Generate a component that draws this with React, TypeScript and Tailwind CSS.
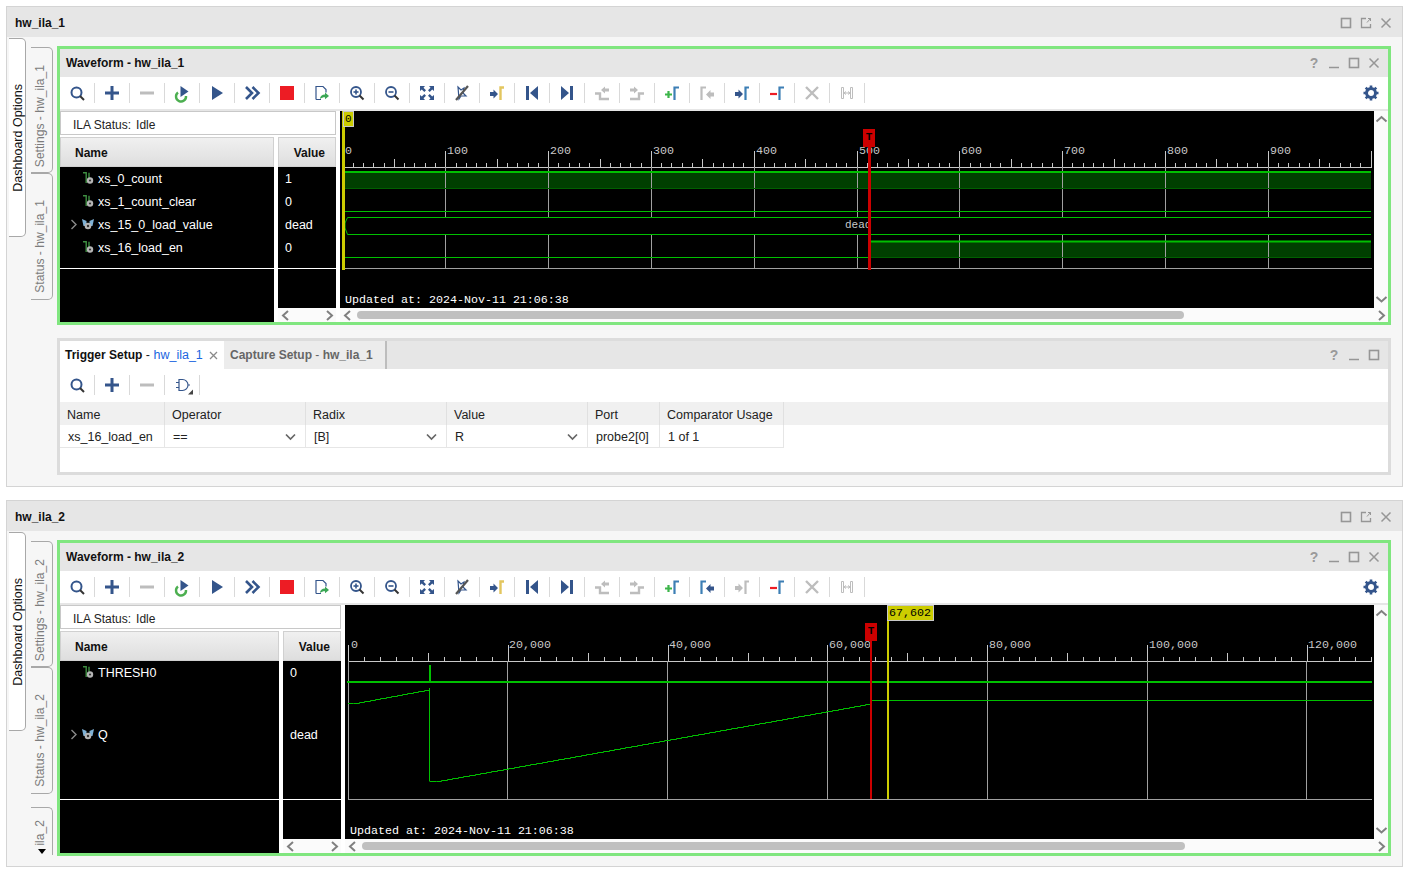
import React from "react";

const BLUE = "#34558b";
const GRAY = "#bdbdbd";
const MARKER = "#3d7fb5";
const MONO = "'Liberation Mono', monospace";

type IconName =
  | "search" | "plus" | "minus" | "runTrigger" | "play" | "fast" | "stop" | "export"
  | "zoomIn" | "zoomOut" | "fit" | "slash" | "goMarkerY" | "first" | "last"
  | "stepBack" | "stepNext" | "addMarker" | "prevMarker" | "prevMarkerOn"
  | "nextMarker" | "nextMarkerOff" | "delMarker" | "cross" | "swap" | "gate";

const ARROW_R = "M1 7h3.500V4.500L9 9l-4.500 4.500V11H1z";
const ARROW_L = "M15 7.500h-3.500V5L7 9.500l4.500 4.500v-2.500H15z";

const Icon: React.FC<{ name: IconName }> = ({ name }) => {
  const body = () => {
    switch (name) {
      case "search":
        return (
          <>
            <circle cx="7.5" cy="7.5" r="5" fill="none" stroke={BLUE} strokeWidth="2" />
            <path d="M11 11l4 4" stroke="#333" strokeWidth="2" />
          </>
        );
      case "plus":
        return <path d="M1 8h14M8 1v14" stroke={BLUE} strokeWidth="3" />;
      case "minus":
        return <path d="M1 8h14" stroke={GRAY} strokeWidth="3" />;
      case "runTrigger":
        return (
          <>
            <path d="M4 7.5a5 5 0 1 0 8 3.5" fill="none" stroke="#4caf50" strokeWidth="2.4" />
            <path d="M6.5 1l8 5.500-8 5.500z" fill={BLUE} />
          </>
        );
      case "play":
        return <path d="M3 1l11 7-11 7z" fill={BLUE} />;
      case "fast":
        return <path d="M2 2l6 6-6 6M8.5 2l6 6-6 6" fill="none" stroke={BLUE} strokeWidth="2.6" />;
      case "stop":
        return <rect x="1" y="1" width="14" height="14" fill="#ed1c24" />;
      case "export":
        return (
          <>
            <path d="M2 14.500v-13h7l3 3v3M2 14.500h5" fill="none" stroke={BLUE} strokeWidth="1.2" />
            <path d="M6 14c0-3 2-4.500 5-4.500V7.500l4 3.500-4 3.200v-2c-2 0-3.500.5-5 1.800z" fill="#3aa655" />
          </>
        );
      case "zoomIn":
      case "zoomOut":
        return (
          <>
            <circle cx="7" cy="7" r="5" fill="none" stroke={BLUE} strokeWidth="1.8" />
            <path d="M4.500 7h5" stroke={BLUE} strokeWidth="1.6" />
            {name === "zoomIn" && <path d="M7 4.500v5" stroke={BLUE} strokeWidth="1.6" />}
            <path d="M10.500 10.500l4 4" stroke="#333" strokeWidth="2" />
          </>
        );
      case "fit":
        return (
          <path
            d="M1 1h5L4.500 2.800 7 5.300 5.300 7 2.800 4.500 1 6zM15 1v5l-1.800-1.500L10.700 7 9 5.300l2.500-2.500L10 1zM1 15v-5l1.800 1.500L5.300 9 7 10.700l-2.500 2.500L6 15zM15 15h-5l1.500-1.800L9 10.700 10.700 9l2.500 2.500L15 10z"
            fill={BLUE}
          />
        );
      case "slash":
        return (
          <>
            <path d="M4 2l3 3 3-2-1 5 3 3H7l-2 3z" fill="none" stroke={BLUE} strokeWidth="1.2" />
            <path d="M14 1L2 15" stroke="#555" strokeWidth="2.2" />
          </>
        );
      case "goMarkerY":
        return (
          <>
            <path d={ARROW_R} fill={BLUE} />
            <path d="M11.500 15V2.500H15" fill="none" stroke="#e3c65f" strokeWidth="2.4" />
          </>
        );
      case "first":
        return <path d="M2 1h3v14H2zM14 1v14L6 8z" fill={BLUE} />;
      case "last":
        return <path d="M14 1h-3v14h3zM2 1v14l8-7z" fill={BLUE} />;
      case "stepBack":
        return (
          <>
            <path d="M1 8.500h5V14h9" fill="none" stroke={GRAY} strokeWidth="2.4" />
            <path d="M7 5l4-3.500v2h4v3h-4v2z" fill={GRAY} />
          </>
        );
      case "stepNext":
        return (
          <>
            <path d="M1 14h9V8.500h5" fill="none" stroke={GRAY} strokeWidth="2.4" />
            <path d="M1 3.500h4v-2L9 5 5 8.500v-2H1z" fill={GRAY} />
          </>
        );
      case "addMarker":
        return (
          <>
            <path d="M1 9.500h7M4.500 6v7" stroke="#3cb54a" strokeWidth="2.2" />
            <path d="M10.500 15V2.500H15" fill="none" stroke={MARKER} strokeWidth="2.2" />
          </>
        );
      case "prevMarker":
        return (
          <>
            <path d="M2.500 15V2.500H7" fill="none" stroke={GRAY} strokeWidth="2.2" />
            <path d={ARROW_L} fill={GRAY} />
          </>
        );
      case "prevMarkerOn":
        return (
          <>
            <path d="M2.500 15V2.500H7" fill="none" stroke={MARKER} strokeWidth="2.2" />
            <path d={ARROW_L} fill={BLUE} />
          </>
        );
      case "nextMarker":
        return (
          <>
            <path d={ARROW_R} fill={BLUE} />
            <path d="M11.500 15V2.500H15" fill="none" stroke={MARKER} strokeWidth="2.2" />
          </>
        );
      case "nextMarkerOff":
        return (
          <>
            <path d={ARROW_R} fill={GRAY} />
            <path d="M11.500 15V2.500H15" fill="none" stroke={GRAY} strokeWidth="2.2" />
          </>
        );
      case "delMarker":
        return (
          <>
            <path d="M1 9h7" stroke="#ed1c24" strokeWidth="2.2" />
            <path d="M10.500 15V2.500H15" fill="none" stroke={MARKER} strokeWidth="2.2" />
          </>
        );
      case "cross":
        return <path d="M2 2l12 12M14 2L2 14" stroke={GRAY} strokeWidth="2.4" />;
      case "swap":
        return (
          <path
            d="M2.500 2.500h2v11h-2zM11.500 2.500h2v11h-2zM5 8h6M5 8l2-1.500M5 8l2 1.500M11 8L9 6.500M11 8l-2 1.500"
            fill="none"
            stroke={GRAY}
            strokeWidth="1"
          />
        );
      case "gate":
        return (
          <>
            <path d="M5 2.500h3.500a5.500 5.500 0 0 1 0 11H5zM2 5.500h3M2 10.500h3M14 8h2" fill="none" stroke={BLUE} strokeWidth="1.2" />
            <path d="M19 12.500v5h-5z" fill="#444" />
          </>
        );
    }
  };
  return (
    <svg width="16" height="16" viewBox="0 0 16 16" overflow="visible">
      {body()}
    </svg>
  );
};

const Toolbar: React.FC<{ icons: IconName[] }> = ({ icons }) => (
  <div className="flex items-center">
    {icons.map((n, i) => (
      <div key={i} className="flex h-5 w-[35px] items-center justify-center border-r border-[#d9d9d9]">
        <Icon name={n} />
      </div>
    ))}
  </div>
);

const WinIcon: React.FC<{ kind: "help" | "min" | "max" | "float" | "close" }> = ({ kind }) => {
  if (kind === "help")
    return <span className="w-5 text-center text-[14px] font-bold leading-none text-[#9a9a9a]">?</span>;
  return (
    <svg width="20" height="12" viewBox="0 0 20 12" fill="none" stroke="#969696">
      {kind === "min" && <path d="M5 10.500h10" strokeWidth="1.5" />}
      {kind === "max" && <rect x="5.500" y="1.500" width="9" height="9" strokeWidth="1.6" />}
      {kind === "float" && (
        <>
          <path d="M10 1.500H5.500v9h9V7" strokeWidth="1.3" />
          <path d="M11 5.500l3.500-4M12 1.500h2.500V4" strokeWidth="1" />
        </>
      )}
      {kind === "close" && <path d="M5.500 1.500l9 9M14.500 1.500l-9 9" strokeWidth="1.5" />}
    </svg>
  );
};

const Chevron: React.FC<{ dir: "l" | "r" | "u" | "d" }> = ({ dir }) => {
  const d = { l: "M8 2L3 6.500 8 11", r: "M4 2l5 4.500L4 11", u: "M1.500 8.500L6.500 4l5 4.500", d: "M1.500 4l5 4.500L11.500 4" }[dir];
  return (
    <svg width="13" height="13" viewBox="0 0 13 13" className="shrink-0">
      <path d={d} fill="none" stroke="#808080" strokeWidth="2" />
    </svg>
  );
};

const BitIcon = () => (
  <svg width="12" height="13" viewBox="0 0 12 13" className="shrink-0">
    <path d="M1 .8h3.200V11M7 .8V6" fill="none" stroke="#3e8e41" strokeWidth="1.4" />
    <circle cx="8" cy="8.500" r="3.200" fill="#b5b5b5" />
    <circle cx="8" cy="8.500" r="1.100" fill="#333" />
  </svg>
);

const BusIcon = () => (
  <svg width="12" height="13" viewBox="0 0 12 13" className="shrink-0">
    <path d="M0 1l4.500 2V8H1.500zM12 1L7.500 3V8h3z" fill="#7fb2d6" />
    <circle cx="6" cy="8" r="3.300" fill="#b5b5b5" />
    <circle cx="6" cy="8" r="1.200" fill="#333" />
  </svg>
);

type Row = { name: string; value: string; bus?: boolean; top?: number };

const RailTab: React.FC<{ label: string; active?: boolean; className: string }> = ({ label, active, className }) => (
  <div
    className={`flex items-end justify-center border-[#a8a8a8] ${className} ${
      active ? "bg-white text-[#111]" : "text-[#7c7c7c]"
    }`}
  >
    <span className="whitespace-nowrap [writing-mode:vertical-rl] rotate-180">{label}</span>
  </div>
);

const Rail: React.FC<{ id: string; extra?: boolean }> = ({ id, extra }) => (
  <div className="flex w-[50px] shrink-0 pl-[2px] leading-none">
    <RailTab
      label="Dashboard Options"
      active
      className="mt-[1px] h-[199px] w-[17px] rounded-r-[5px] border-y border-r pb-[44px] pl-[2px] text-[12.5px]"
    />
    <div className="ml-[5px] mt-[10px] flex flex-col text-[12.1px]">
      <RailTab label={`Settings - ${id}`} className="h-[126px] w-[22px] rounded-r-[5px] border-y border-r pb-[5px] pr-[2px]" />
      <RailTab label={`Status - ${id}`} className="h-[127px] w-[22px] rounded-r-[5px] border-y border-r pb-[6px] pr-[2px]" />
      {extra && (
        <div className="relative mt-[13px] h-[48px] w-[22px]">
          <RailTab label="ila_2" className="h-full rounded-tr-[5px] border-t border-r pb-[9px] pr-[2px]" />
          <svg width="8" height="5" viewBox="0 0 8 5" className="absolute bottom-[1px] left-[7px]">
            <path d="M0 0h8L4 5z" fill="#000" />
          </svg>
        </div>
      )}
    </div>
  </div>
);

const HScroll: React.FC<{ className: string }> = ({ className }) => (
  <div className="flex h-[14px] items-center bg-[#fbfbfb] pl-[2px]">
    <Chevron dir="l" />
    <div className={`h-2 rounded-full bg-[#c0c0c0] ${className}`} />
    <div className="flex-1" />
    <Chevron dir="r" />
  </div>
);

const Ticks: React.FC<{ x0: number; step: number; n: number; major: number; mid: number; y: number; endX: number }> = ({
  x0,
  step,
  n,
  major,
  mid,
  y,
  endX,
}) => (
  <g stroke="#c8c8c8" strokeWidth="1">
    <path d={`M${x0} ${y + 0.5}H${endX}`} />
    {Array.from({ length: n }, (_, i) => {
      const x = Math.round(x0 + step * i) + 0.5;
      if (x > endX) return null;
      const top = i % major === 0 ? 16 : i % mid === 0 ? 8 : 4;
      return <path key={i} d={`M${x} ${y}V${y - top}`} />;
    })}
  </g>
);

const Wave1 = () => {
  const xAt = (n: number) => Math.round(342.5 + n * 1.028) + 0.5;
  const labels = [100, 200, 300, 400, 500, 600, 700, 800, 900];
  return (
    <svg width="1034" height="197" viewBox="340 111 1034 197" className="block">
      <Ticks x0={342.5} step={10.28} n={101} major={10} mid={5} y={167} endX={1372} />
      <text x="345" y="154" fill="#c8c8c8" fontFamily={MONO} fontSize="11.67">0</text>
      {labels.map((l) => (
        <text key={l} x={xAt(l) + 1.5} y="154" fill="#c8c8c8" fontFamily={MONO} fontSize="11.67">{l}</text>
      ))}
      <rect x="345" y="171" width="1026" height="18" fill="#003f00" />
      <rect x="870" y="241" width="501" height="17" fill="#003f00" />
      <g stroke="#a0a0a0">
        {labels.map((l) => (
          <path key={l} d={`M${xAt(l)} 167V268`} />
        ))}
        <path d="M345 268.500H1372" />
      </g>
      <path d="M345 172H1371" stroke="#00c000" strokeWidth="2" />
      <path d="M345 188.500H1371" stroke="#006000" />
      <path d="M345 211.500H1371" stroke="#00c000" />
      <rect x="345" y="217" width="1026" height="18" fill="#000" />
      <path d="M1371 217.500H347.500L345 223v5l2.500 6.500H1371" fill="none" stroke="#00c000" />
      <text x="845" y="228" fill="#c8c8c8" fontFamily={MONO} fontSize="11">dead</text>
      <path d="M345 257.500H870" stroke="#00c000" />
      <path d="M870 241.500H1371" stroke="#00c000" strokeWidth="2" />
      <path d="M870 257.500H1371" stroke="#006000" />
      <rect x="342" y="111" width="3" height="159" fill="#cccc00" />
      <rect x="343.500" y="111.500" width="10" height="15" fill="#cccc00" stroke="#c8c8c8" />
      <text x="345" y="122" fill="#000" fontFamily={MONO} fontSize="11">0</text>
      <rect x="868" y="147" width="3" height="123" fill="#cc0000" />
      <rect x="863" y="129" width="12" height="18" fill="#cc0000" />
      <text x="869" y="140" textAnchor="middle" fill="#000" fontFamily={MONO} fontSize="11" fontWeight="bold">T</text>
      <text x="345" y="303" fill="#fff" fontFamily={MONO} fontSize="11.67">Updated at: 2024-Nov-11 21:06:38</text>
    </svg>
  );
};

const stairs = (x0: number, y0: number, x1: number, y1: number, steps: number) => {
  let d = `M${x0} ${y0}`;
  for (let i = 1; i <= steps; i++) {
    const x = Math.round(x0 + ((x1 - x0) * i) / steps) + 0.5;
    const y = Math.round(y0 + ((y1 - y0) * i) / steps) + 0.5;
    d += `H${x}V${y}`;
  }
  return d;
};

const Wave2 = () => {
  const grid = [
    [507.5, "20,000"],
    [667.5, "40,000"],
    [827.5, "60,000"],
    [987.5, "80,000"],
    [1147.5, "100,000"],
    [1306.5, "120,000"],
  ] as const;
  return (
    <svg width="1028" height="234" viewBox="345 605 1028 234" className="block">
      <Ticks x0={348} step={15.98} n={65} major={10} mid={5} y={661} endX={1372} />
      <text x="351" y="648" fill="#c8c8c8" fontFamily={MONO} fontSize="11.67">0</text>
      {grid.map(([x, l]) => (
        <text key={l} x={x + 1.5} y="648" fill="#c8c8c8" fontFamily={MONO} fontSize="11.67">{l}</text>
      ))}
      <g stroke="#a0a0a0">
        <path d="M348.500 661V799" />
        {grid.map(([x, l]) => (
          <path key={l} d={`M${x} 661V799`} />
        ))}
        <path d="M348 799.500H1372" />
      </g>
      <path d="M347 682H1372" stroke="#00c000" strokeWidth="2" />
      <path d="M430 665V682" stroke="#00c000" strokeWidth="2" />
      <path d={stairs(348, 703.5, 429, 688.5, 15)} fill="none" stroke="#00c000" />
      <path d="M429.500 688V781.500" stroke="#00c000" />
      <path d={stairs(430, 781.5, 871, 702.5, 79)} fill="none" stroke="#00c000" />
      <path d="M871 700.500H1372" stroke="#00c000" />
      <rect x="870" y="641" width="2" height="158" fill="#cc0000" />
      <rect x="865" y="623" width="12" height="18" fill="#cc0000" />
      <text x="871" y="634" textAnchor="middle" fill="#000" fontFamily={MONO} fontSize="11" fontWeight="bold">T</text>
      <rect x="887" y="620" width="2" height="179" fill="#cccc00" />
      <rect x="887.500" y="605.500" width="46" height="15" fill="#cccc00" stroke="#c8c8c8" />
      <text x="889" y="616" fill="#000" fontFamily={MONO} fontSize="11.67">67,602</text>
      <text x="350" y="834" fill="#fff" fontFamily={MONO} fontSize="11.67">Updated at: 2024-Nov-11 21:06:38</text>
    </svg>
  );
};

const WaveHeader: React.FC<{ label: string; className: string }> = ({ label, className }) => (
  <div
    className={`flex h-[30px] items-center bg-gradient-to-b from-[#f0f0f0] to-[#dedede] border border-[#d0d0d0] pt-[1px] text-[12px] font-bold text-[#111] ${className}`}
  >
    {label}
  </div>
);

const WavePanel: React.FC<{
  id: string;
  icons: IconName[];
  rows: Row[];
  nameW: string;
  frameH: string;
  wave: React.ReactNode;
  thumb: string;
  rowsH: string;
}> = ({ id, icons, rows, nameW, frameH, wave, thumb, rowsH }) => (
  <div className={`flex w-[1334px] flex-col border-[3px] border-[#80e67f] bg-[#e6e6e6] ${frameH}`}>
    <div className="flex h-7 shrink-0 items-center justify-between pl-[6px] pr-[4px] text-[12px] font-bold text-[#111]">
      <span>Waveform - {id}</span>
      <div className="flex items-center">
        <WinIcon kind="help" />
        <WinIcon kind="min" />
        <WinIcon kind="max" />
        <WinIcon kind="close" />
      </div>
    </div>
    <div className="flex h-8 shrink-0 items-center justify-between bg-white pr-[9px]">
      <Toolbar icons={icons} />
      <svg width="16" height="16" viewBox="0 0 16 16">
        <circle cx="8" cy="8" r="4.500" fill="none" stroke={BLUE} strokeWidth="3" />
        <path
          d="M8 .5v3M8 12.500v3M.5 8h3M12.500 8h3M2.700 2.700l2 2M11.300 11.300l2 2M13.300 2.700l-2 2M4.700 11.300l-2 2"
          stroke={BLUE}
          strokeWidth="2.6"
        />
      </svg>
    </div>
    <div className="mt-[2px] flex min-h-0 flex-1 bg-white">
      <div className={`flex shrink-0 flex-col ${nameW}`}>
        <div className="flex h-6 items-center border border-[#c8c8c8] bg-white pl-3 pt-[3px] text-[12px] text-[#222]">
          ILA Status:<span className="ml-[5px]">Idle</span>
        </div>
        <div className="mt-[2px] flex min-h-0 flex-1 gap-1">
          <div className="flex min-w-0 flex-1 flex-col">
            <WaveHeader label="Name" className="pl-[14px]" />
            <div className="flex-1 bg-black text-[12.5px] text-white">
              <div className={`border-b border-white ${rowsH}`}>
                {rows.map((r) => (
                  <div
                    key={r.name}
                    className={`relative flex h-[23px] items-center pl-[38px] pt-[2px] ${r.top ? "mt-[39px]" : ""}`}
                  >
                    {r.bus && (
                      <svg width="8" height="11" viewBox="0 0 8 11" className="absolute left-[10px] top-[6px]">
                        <path d="M1.500 1l4.500 4.500L1.500 10" fill="none" stroke="#8a8a8a" strokeWidth="1.4" />
                      </svg>
                    )}
                    <span className="absolute left-[22px] top-[5px]">{r.bus ? <BusIcon /> : <BitIcon />}</span>
                    {r.name}
                  </div>
                ))}
              </div>
            </div>
          </div>
          <div className="flex w-[58px] shrink-0 flex-col">
            <WaveHeader label="Value" className="justify-end pr-[10px]" />
            <div className="flex-1 bg-black text-[12.5px] text-white">
              <div className={`border-b border-white ${rowsH}`}>
                {rows.map((r) => (
                  <div key={r.name} className={`flex h-[23px] items-center pl-[7px] pt-[2px] ${r.top ? "mt-[39px]" : ""}`}>
                    {r.value}
                  </div>
                ))}
              </div>
            </div>
            <HScroll className="hidden" />
          </div>
        </div>
      </div>
      <div className="ml-[4px] flex min-w-0 flex-1 flex-col">
        <div className="flex min-h-0 flex-1">
          <div className="min-w-0 flex-1 bg-black">{wave}</div>
          <div className="flex w-[14px] flex-col items-center justify-between bg-[#fbfbfb] py-[2px]">
            <Chevron dir="u" />
            <Chevron dir="d" />
          </div>
        </div>
        <HScroll className={thumb} />
      </div>
    </div>
  </div>
);

const TriggerSetup = () => {
  const cols = [
    ["Name", "xs_16_load_en", "w-[105px]", false],
    ["Operator", "==", "w-[141px]", true],
    ["Radix", "[B]", "w-[141px]", true],
    ["Value", "R", "w-[141px]", true],
    ["Port", "probe2[0]", "w-[72px]", false],
    ["Comparator Usage", "1 of 1", "w-[124px]", false],
  ] as const;
  return (
    <div className="mt-[13px] flex h-[137px] w-[1334px] flex-col border-[3px] border-[#dcdcdc] bg-white text-[12.5px] text-[#222]">
      <div className="flex h-7 shrink-0 items-center bg-[#e6e6e6] pr-[4px]">
        <div className="flex h-full w-[164px] items-center gap-[6px] bg-white pl-[5px]">
          <span>
            <b className="text-[12px] text-[#111]">Trigger Setup</b> - <span className="text-[#1a66e0]">hw_ila_1</span>
          </span>
          <svg width="9" height="9" viewBox="0 0 9 9">
            <path d="M1 1l7 7M8 1L1 8" stroke="#8a8a8a" strokeWidth="1.3" />
          </svg>
        </div>
        <div className="flex h-full w-[163px] items-center border-r-2 border-[#bdbdbd] bg-[#ececec] pl-[6px] text-[12px] text-[#666]">
          <b>Capture Setup</b>&nbsp;-&nbsp;<b>hw_ila_1</b>
        </div>
        <div className="ml-auto flex items-center">
          <WinIcon kind="help" />
          <WinIcon kind="min" />
          <WinIcon kind="max" />
        </div>
      </div>
      <div className="flex h-[33px] shrink-0 items-center pb-[2px]">
        <Toolbar icons={["search", "plus", "minus", "gate"]} />
      </div>
      <div className="flex h-[23px] shrink-0 bg-[#f0f0f0]">
        {cols.map(([h, , w]) => (
          <div key={h} className={`flex items-center border-r border-[#e0e0e0] pl-[7px] pt-[3px] ${w}`}>
            {h}
          </div>
        ))}
      </div>
      <div className="flex h-[23px] shrink-0">
        {cols.map(([h, v, w, drop]) => (
          <div key={h} className={`flex items-center justify-between border-b border-r border-[#e6e6e6] pl-2 pr-[9px] pt-[2px] ${w}`}>
            <span>{v}</span>
            {drop && (
              <svg width="11" height="8" viewBox="0 0 11 8">
                <path d="M1 1.500l4.500 4.500L10 1.500" fill="none" stroke="#666" strokeWidth="1.7" />
              </svg>
            )}
          </div>
        ))}
      </div>
    </div>
  );
};

const Dashboard: React.FC<{ id: string; extra?: boolean; className: string; children: React.ReactNode }> = ({
  id,
  extra,
  className,
  children,
}) => (
  <div className={`flex w-[1397px] flex-col border border-[#d4d4d4] bg-[#f6f6f6] ${className}`}>
    <div className="flex h-[30px] shrink-0 items-center justify-between bg-[#e6e6e6] pl-2 pr-[6px] pt-[1px] text-[12px] font-bold text-[#111]">
      {id}
      <div className="flex items-center">
        <WinIcon kind="max" />
        <WinIcon kind="float" />
        <WinIcon kind="close" />
      </div>
    </div>
    <div className="flex min-h-0 flex-1">
      <Rail id={id} extra={extra} />
      <div className="flex flex-col pt-[9px]">{children}</div>
    </div>
  </div>
);

const icons1: IconName[] = [
  "search", "plus", "minus", "runTrigger", "play", "fast", "stop", "export",
  "zoomIn", "zoomOut", "fit", "slash", "goMarkerY", "first", "last",
  "stepBack", "stepNext", "addMarker", "prevMarker", "nextMarker", "delMarker", "cross", "swap",
];
const icons2: IconName[] = icons1.map((n) =>
  n === "prevMarker" ? "prevMarkerOn" : n === "nextMarker" ? "nextMarkerOff" : n
);

export default function App() {
  return (
    <div
      className="flex h-[870px] w-[1404px] flex-col gap-[13px] overflow-hidden bg-white pl-[6px] pt-[6px]"
      style={{ fontFamily: "'Liberation Sans', Arial, sans-serif" }}
    >
      <Dashboard id="hw_ila_1" className="h-[481px]">
        <WavePanel
          id="hw_ila_1"
          icons={icons1}
          frameH="h-[279px]"
          nameW="w-[276px]"
          rowsH="h-[102px]"
          thumb="ml-[2px] w-[827px]"
          wave={<Wave1 />}
          rows={[
            { name: "xs_0_count", value: "1" },
            { name: "xs_1_count_clear", value: "0" },
            { name: "xs_15_0_load_value", value: "dead", bus: true },
            { name: "xs_16_load_en", value: "0" },
          ]}
        />
        <TriggerSetup />
      </Dashboard>
      <Dashboard id="hw_ila_2" extra className="h-[367px]">
        <WavePanel
          id="hw_ila_2"
          icons={icons2}
          frameH="h-[316px]"
          nameW="w-[281px]"
          rowsH="h-[139px]"
          thumb="ml-[2px] w-[823px]"
          wave={<Wave2 />}
          rows={[
            { name: "THRESH0", value: "0" },
            { name: "Q", value: "dead", bus: true, top: 39 },
          ]}
        />
      </Dashboard>
    </div>
  );
}
